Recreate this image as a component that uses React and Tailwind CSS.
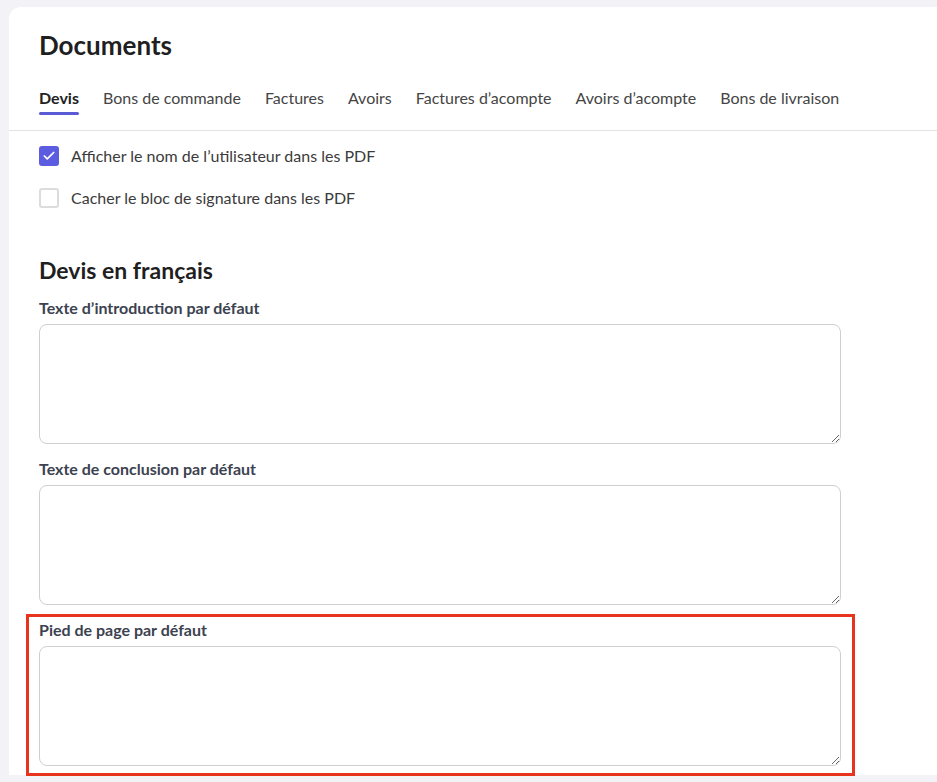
import { Check } from 'lucide-react';

const tabs = ['Devis', 'Bons de commande', 'Factures', 'Avoirs', 'Factures d’acompte', 'Avoirs d’acompte', 'Bons de livraison'];

function Checkbox({ checked, label }) {
  return (
    <label className="flex items-center gap-3 h-5">
      {checked ? (
        <span className="w-5 h-5 rounded-[3px] bg-[#5b5ce0] flex items-center justify-center">
          <Check className="w-3.5 h-3.5 text-white" strokeWidth={3} />
        </span>
      ) : (
        <span className="w-5 h-5 rounded-[3px] border-2 border-[#dcdcdc] bg-white" />
      )}
      <span className="text-[16px] leading-5 text-[#3b3b3b]">{label}</span>
    </label>
  );
}

function Field({ label }) {
  return (
    <div>
      <div className="text-[16px] leading-5 font-bold text-[#3c4250] mb-1.5">{label}</div>
      <textarea className="block w-full h-[120px] rounded-lg border border-[#cfcfcf] bg-white outline-none" />
    </div>
  );
}

export default function App() {
  return (
    <div className="h-[782px] bg-[#f3f3f7] pl-[9px] pt-[7px] pb-[7px] overflow-hidden" style={{ fontFamily: 'Lato, "Noto Sans", sans-serif' }}>
      <div className="h-full bg-white rounded-tl-xl">
        <div className="px-[30px] pt-[22px]">
          <h1 className="text-[26px] leading-8 font-bold text-[#1f1f1f]">Documents</h1>
          <div className="flex gap-6 mt-[27px]">
            {tabs.map((t, i) => (
              <div key={t} className="flex flex-col">
                <span className={`text-[16px] leading-5 ${i === 0 ? 'font-bold text-[#222]' : 'text-[#454545]'}`}>{t}</span>
                <span className={`mt-1 h-[3px] rounded-full ${i === 0 ? 'bg-[#5b5bd6]' : 'bg-transparent'}`} />
              </div>
            ))}
          </div>
        </div>
        <div className="mt-[15px] border-t border-[#e3e3e3]" />
        <div className="px-[30px] pt-[15px] w-[862px]">
          <div className="flex flex-col gap-[22px]">
            <Checkbox checked label="Afficher le nom de l’utilisateur dans les PDF" />
            <Checkbox label="Cacher le bloc de signature dans les PDF" />
          </div>
          <h2 className="mt-12 text-[23px] leading-7 font-bold text-[#1f1f1f]">Devis en français</h2>
          <div className="mt-3.5 flex flex-col gap-[15px]">
            <Field label="Texte d’introduction par défaut" />
            <Field label="Texte de conclusion par défaut" />
            <div className="-ml-[13px] -mr-[14px] -mt-[6px] border-[3px] border-[#e8341f] pt-[3px] pl-[10px] pr-[11px] pb-[7px]">
              <Field label="Pied de page par défaut" />
            </div>
          </div>
        </div>
      </div>
    </div>
  );
}
